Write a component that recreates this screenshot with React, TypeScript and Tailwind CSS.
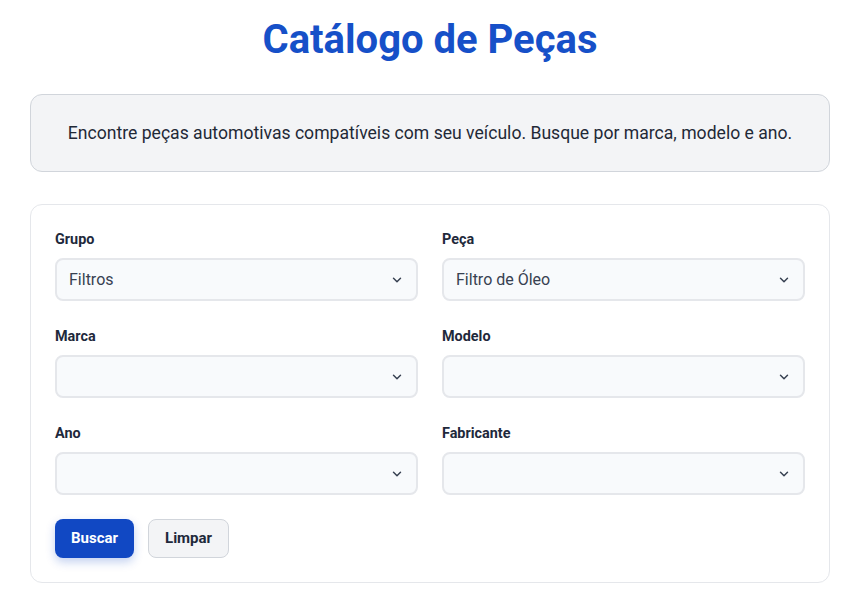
import { ChevronDown } from "lucide-react";

const fields = [
  { label: "Grupo", value: "Filtros" },
  { label: "Peça", value: "Filtro de Óleo" },
  { label: "Marca", value: "" },
  { label: "Modelo", value: "" },
  { label: "Ano", value: "" },
  { label: "Fabricante", value: "" },
];

function SelectField({ label, value }: { label: string; value: string }) {
  return (
    <div className="flex flex-col">
      <label className="mb-[7px] text-[14.4px] font-bold leading-[22px] text-[#1e293b]">{label}</label>
      <div className="flex h-[43px] items-center justify-between rounded-lg border-2 border-[#e5e7eb] bg-[#f8fafc] pl-3 pr-3">
        <span className="text-[16px] text-[#374151]">{value}</span>
        <ChevronDown size={14} strokeWidth={2.5} className="text-[#374151]" />
      </div>
    </div>
  );
}

export default function App() {
  return (
    <div className="min-h-screen bg-white font-['Roboto',sans-serif]">
      <div className="ml-[30px] w-[800px] pt-[14px]">
        <h1 className="text-center text-[40px] font-bold leading-[52px] text-[#1650c8]">
          Catálogo de Peças
        </h1>

        <div className="mt-[28px] flex h-[78px] items-center justify-center rounded-xl border border-[#d1d5db] bg-[#f3f4f6]">
          <p className="text-[17.6px] text-[#1f2937]">
            Encontre peças automotivas compatíveis com seu veículo. Busque por marca, modelo e ano.
          </p>
        </div>

        <div className="mt-[32px] rounded-xl border border-[#e5e7eb] bg-white px-6 pb-6 pt-6">
          <div className="grid grid-cols-2 gap-x-[24px] gap-y-[25px]">
            {fields.map((f) => (
              <SelectField key={f.label} label={f.label} value={f.value} />
            ))}
          </div>
          <div className="mt-[24px] flex gap-[14px]">
            <button className="h-[39px] rounded-lg bg-[#1148c3] px-4 text-[15px] font-bold text-white shadow-[0_4px_10px_rgba(17,72,195,0.25)]">
              Buscar
            </button>
            <button className="h-[39px] rounded-lg border border-[#d1d5db] bg-[#f3f4f6] px-4 text-[15px] font-bold text-[#1e293b]">
              Limpar
            </button>
          </div>
        </div>
      </div>
    </div>
  );
}
